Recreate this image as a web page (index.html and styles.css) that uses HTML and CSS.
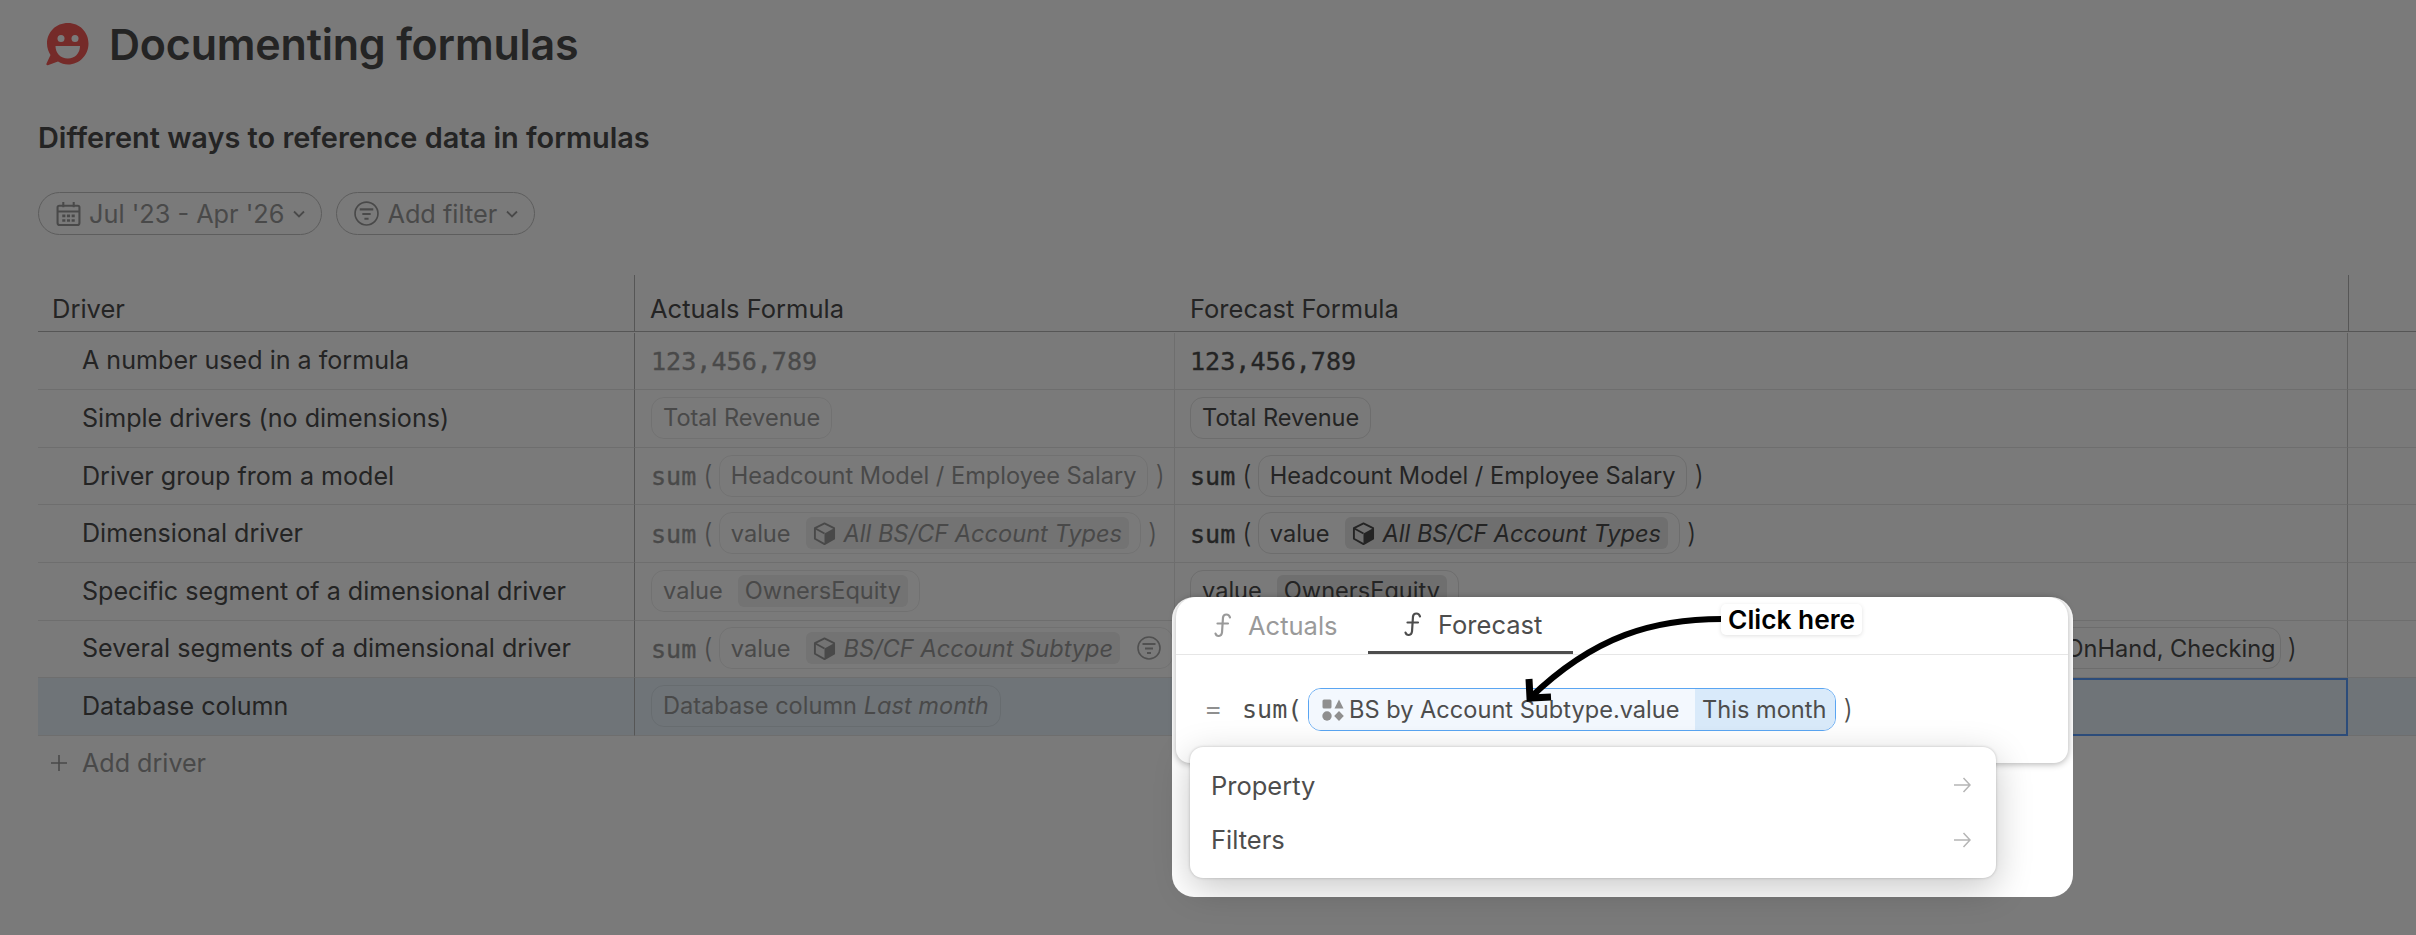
FILE: index.html
```html
<!doctype html>
<html>
<head>
    <meta charset="utf-8">
    <title>Documenting formulas</title>
    <link rel="stylesheet" href="styles.css">
</head>
<body>
<svg width="0" height="0" class="defs">
    <symbol id="cube" viewBox="0 0 24 24">
        <path d="M12 1.5 22 6.5V17.5L12 23 2 17.5V6.5Z" fill="none" stroke="currentColor" stroke-width="2" stroke-linejoin="round"/>
        <path d="M12 12 22 6.5V17.5L12 23Z" fill="currentColor"/>
        <path d="M2 6.5 12 12" stroke="currentColor" stroke-width="2"/>
    </symbol>
    <symbol id="filter" viewBox="0 0 24 24">
        <circle cx="12" cy="12" r="11" fill="none" stroke="currentColor" stroke-width="1.6"/>
        <path d="M5.5 8h13M8 12.5h8M10 17h4" fill="none" stroke="currentColor" stroke-width="2"/>
    </symbol>
    <symbol id="chevron" viewBox="0 0 14 14">
        <path d="M2 4.5 7 9.5 12 4.5" fill="none" stroke="currentColor" stroke-width="1.8"/>
    </symbol>
    <symbol id="fx" viewBox="0 0 20 26">
        <path d="M17 5.500C16 1.500 10.500 1.500 10 5.500L9 20.500C8.500 25 3.500 25 2.500 21.500M4.500 11.500H15" fill="none" stroke="currentColor" stroke-width="2.200" stroke-linecap="round"/>
    </symbol>
    <symbol id="go" viewBox="0 0 18 18">
        <path d="M1 9H17M10.500 2 17 9 10.500 16" fill="none" stroke="currentColor" stroke-width="1.500"/>
    </symbol>
</svg>

<div class="page">
    <header class="title">
        <svg class="logo" viewBox="0 0 44 44">
            <path d="M23 1C11 1 2 10 2 21.500C2 26 3.500 30 5.500 33L1.500 41.500C1 43 2 43.500 3.500 43L13 39.500C16 41.500 19.500 42.500 23 42.500C34.500 42.500 43.500 33 43.500 21.500C43.500 10 34.500 1 23 1Z" fill="#f45a57"/>
            <circle cx="16" cy="16.500" r="3.500" fill="#fff"/>
            <circle cx="30" cy="16.500" r="3.500" fill="#fff"/>
            <path d="M10.500 24H35C35 31 30 36.500 22.800 36.500C15.500 36.500 10.500 31 10.500 24Z" fill="#fff"/>
        </svg>
        <h1>Documenting formulas</h1>
    </header>
    <h2>Different ways to reference data in formulas</h2>
    <div class="filters">
        <div class="pill">
            <svg class="pill-icon" viewBox="0 0 24 24"><path d="M3 4.500H21A1.500 1.500 0 0 1 22.500 6V21A2 2 0 0 1 20.500 23H3.500A2 2 0 0 1 1.500 21V6A1.500 1.500 0 0 1 3 4.500ZM1.500 10H22.500M7 1V6M17 1V6" fill="none" stroke="currentColor" stroke-width="2"/><path d="M6 13h3v2.500H6zM10.500 13h3v2.500h-3zM15 13h3v2.500h-3zM6 17.500h3V20H6zM10.500 17.500h3V20h-3zM15 17.500h3V20h-3z" fill="currentColor"/></svg>
            <span>Jul '23 - Apr '26</span>
            <svg class="chev"><use href="#chevron"/></svg>
        </div>
        <div class="pill">
            <svg class="pill-icon"><use href="#filter"/></svg>
            <span>Add filter</span>
            <svg class="chev"><use href="#chevron"/></svg>
        </div>
    </div>

    <div class="grid">
        <div class="head first">Driver</div>
        <div class="head second">Actuals Formula</div>
        <div class="head third">Forecast Formula</div>
        <div class="head last"></div>

        <div class="cell name">A number used in a formula</div>
        <div class="cell actuals"><span class="mono">123,456,789</span></div>
        <div class="cell forecast"><span class="mono">123,456,789</span></div>
        <div class="cell end"></div>

        <div class="cell name">Simple drivers (no dimensions)</div>
        <div class="cell actuals"><span class="chip">Total Revenue</span></div>
        <div class="cell forecast"><span class="chip">Total Revenue</span></div>
        <div class="cell end"></div>

        <div class="cell name">Driver group from a model</div>
        <div class="cell actuals"><span class="mono fn">sum</span><span class="paren">(</span><span class="chip">Headcount Model / Employee Salary</span><span class="paren close">)</span></div>
        <div class="cell forecast"><span class="mono fn">sum</span><span class="paren">(</span><span class="chip">Headcount Model / Employee Salary</span><span class="paren close">)</span></div>
        <div class="cell end"></div>

        <div class="cell name">Dimensional driver</div>
        <div class="cell actuals"><span class="mono fn">sum</span><span class="paren">(</span><span class="chip">value<span class="seg"><svg class="cube"><use href="#cube"/></svg><i>All BS/CF Account Types</i></span></span><span class="paren close">)</span></div>
        <div class="cell forecast"><span class="mono fn">sum</span><span class="paren">(</span><span class="chip">value<span class="seg"><svg class="cube"><use href="#cube"/></svg><i>All BS/CF Account Types</i></span></span><span class="paren close">)</span></div>
        <div class="cell end"></div>

        <div class="cell name">Specific segment of a dimensional driver</div>
        <div class="cell actuals"><span class="chip">value<span class="seg plain">OwnersEquity</span></span></div>
        <div class="cell forecast"><span class="chip">value<span class="seg plain">OwnersEquity</span></span></div>
        <div class="cell end"></div>

        <div class="cell name">Several segments of a dimensional driver</div>
        <div class="cell actuals"><span class="mono fn">sum</span><span class="paren">(</span><span class="chip grow">value<span class="seg"><svg class="cube"><use href="#cube"/></svg><i>BS/CF Account Subtype</i></span><svg class="row-filter"><use href="#filter"/></svg></span></div>
        <div class="cell forecast wide"><span class="mono fn">sum</span><span class="paren">(</span><span class="chip grow">value<span class="seg"><svg class="cube"><use href="#cube"/></svg><i>BS/CF Account Subtype</i></span><svg class="row-filter"><use href="#filter"/></svg><span class="list">CashOnHand, Checking</span></span><span class="paren close">)</span></div>
        <div class="cell end"></div>

        <div class="cell name picked">Database column</div>
        <div class="cell actuals picked"><span class="chip">Database column&nbsp;<i>Last month</i></span></div>
        <div class="cell forecast picked active"></div>
        <div class="cell end picked"></div>
    </div>

    <div class="add-driver">
        <svg class="plus" viewBox="0 0 18 18"><path d="M9 1V17M1 9H17" fill="none" stroke="currentColor" stroke-width="1.600"/></svg>
        Add driver
    </div>
</div>

<div class="dim"></div>

<div class="spot">
    <div class="editor">
        <div class="tabs">
            <div class="tab"><svg class="fx"><use href="#fx"/></svg>Actuals</div>
            <div class="tab on"><svg class="fx"><use href="#fx"/></svg>Forecast</div>
        </div>
        <div class="formula">
            <span class="eq">=</span>
            <span class="mono sum">sum(</span>
            <span class="token">
                <span class="token-main">
                    <svg class="shapes" viewBox="0 0 22 22">
                        <rect x="0.500" y="0.500" width="9" height="9" rx="1.500" fill="#8f8f8f"/>
                        <path d="M17 0.500 21.500 9.500H12.500Z" fill="#8f8f8f"/>
                        <circle cx="5" cy="17" r="4.700" fill="#8f8f8f"/>
                        <path d="M17 12 21.800 17 17 22 12.200 17Z" fill="#8f8f8f"/>
                    </svg>
                    BS by Account Subtype.value
                </span>
                <span class="token-time">This month</span>
            </span>
            <span class="paren pop">)</span>
        </div>
    </div>
    <div class="menu">
        <div class="menu-item">Property<svg class="go"><use href="#go"/></svg></div>
        <div class="menu-item">Filters<svg class="go"><use href="#go"/></svg></div>
    </div>
</div>

<svg class="pointer" viewBox="0 0 215 100">
    <path d="M207 9C140 9 80 25 15 88" fill="none" stroke="#000" stroke-width="6"/>
    <path d="M14 69 15 88 36 87" fill="none" stroke="#000" stroke-width="7"/>
</svg>
<div class="hint">Click here</div>
</body>
</html>
```

FILE: styles.css
```css
html, body {
    margin: 0;
    height: 100%;
    overflow: hidden;
}
body {
    background: #fff;
    color: #4d4d4d;
    font-family: Inter, "Liberation Sans", sans-serif;
    font-size: 25.100px;
}
.defs {
    position: absolute;
}
.page {
    padding-left: 38px;
}

.title {
    display: flex;
    align-items: center;
    gap: 20px;
    height: 42px;
    padding-top: 23px;
    margin-left: 7px;
}
.logo {
    width: 44px;
    height: 44px;
}
h1 {
    margin: 0;
    font-size: 43px;
    font-weight: 600;
    letter-spacing: -0.2px;
}
h2 {
    margin: 54px 0 0;
    font-size: 28.900px;
    font-weight: 600;
    line-height: 38px;
    height: 38px;
}

.filters {
    display: flex;
    gap: 14px;
    margin-top: 35px;
    color: #9a9a9a;
}
.pill {
    display: flex;
    align-items: center;
    height: 41px;
    padding: 0 15px 0 17px;
    border: 1px solid #c2c2c2;
    border-radius: 22px;
    font-size: 25.300px;
}
.pill-icon {
    width: 25px;
    height: 25px;
    margin-right: 8px;
}
.chev {
    width: 14px;
    height: 14px;
    margin-left: 8px;
}

.grid {
    display: grid;
    grid-template-columns: 597px 540px 1173px 1fr;
    grid-auto-rows: 57.6px;
    margin-top: 40px;
}
.grid .head {
    display: flex;
    align-items: center;
    height: 57px;
    padding: 10px 0 0 14px;
    border-bottom: 1px solid #b5b5b5;
    box-sizing: border-box;
    font-size: 25.500px;
}
.head.first {
    border-right: 1px solid #b5b5b5;
}
.grid .head.second {
    padding-left: 15px;
}
.grid .head.third {
    padding-left: 15px;
}
.head.last {
    border-left: 1px solid #b5b5b5;
}
.cell {
    display: flex;
    align-items: center;
    min-width: 0;
    overflow: hidden;
    white-space: nowrap;
    box-sizing: border-box;
    border-bottom: 1px solid #e6e6e6;
    height: 57.6px;
    padding-bottom: 1px;
}
.name {
    padding-left: 44px;
    border-right: 1px solid #b5b5b5;
}
.actuals {
    padding: 0 15px 1px 16px;
    color: #9a9a9a;
    border-right: 1px solid #e6e6e6;
}
.forecast {
    padding-left: 15px;
    border-right: 1px solid #c8c8c8;
}
.forecast.wide {
    padding-right: 50px;
}
.picked {
    background: #e8f3fb;
}
.picked.active {
    border: 2px solid #5c9fff;
}

.mono {
    margin-top: 2px;
    font-family: "DejaVu Sans Mono", "Liberation Mono", monospace;
    font-size: 25.100px;
    -webkit-text-stroke: 0.35px currentColor;
}
.fn {
    margin-right: 7px;
}
.paren {
    font-size: 27px;
    font-weight: 300;
    margin-right: 6px;
}
.paren.close {
    margin: 0 0 0 7px;
}

.chip {
    display: inline-flex;
    align-items: center;
    flex: none;
    height: 42px;
    padding: 0 11px;
    box-sizing: border-box;
    border: 1px solid rgba(0, 0, 0, 0.11);
    border-radius: 13px;
    font-size: 23.600px;
}
.actuals .chip {
    border-color: rgba(0, 0, 0, 0.07);
}
.chip.grow {
    flex: 1;
}
.seg {
    display: inline-flex;
    align-items: center;
    height: 32px;
    margin-left: 15px;
    padding: 0 7px;
    background: #e8e8e8;
    border-radius: 6px;
}
.actuals .seg {
    background: #f0f0f0;
}
.cube {
    width: 23px;
    height: 23px;
    margin-right: 8px;
}
.row-filter {
    flex: none;
    width: 24px;
    height: 24px;
    margin-left: 17px;
    color: #a8a8a8;
}
.list {
    margin: 0 -7px 0 auto;
}

.add-driver {
    display: flex;
    align-items: center;
    height: 55px;
    padding-left: 12px;
    color: #999;
}
.plus {
    width: 18px;
    height: 18px;
    margin-right: 14px;
}

.dim {
    position: absolute;
    inset: 0;
    background: rgba(0, 0, 0, 0.52);
}

.spot {
    position: absolute;
    left: 1172px;
    top: 597px;
    width: 901px;
    height: 300px;
    background: #fff;
    border-radius: 22px;
}
.editor {
    height: 166px;
    margin: 0 5px 0 4px;
    background: #fff;
    border-radius: 20px 20px 14px 14px;
    box-shadow: 0 1px 7px rgba(0, 0, 0, 0.32);
}
.tabs {
    display: flex;
    height: 57px;
    padding-left: 25px;
    border-bottom: 1px solid #e6e6e6;
    font-size: 25.500px;
}
.tab {
    display: flex;
    align-items: center;
    width: 143px;
    padding: 0 12px;
    color: #9a9a9a;
    height: 56px;
}
.tab.on {
    width: 170px;
    padding: 0 0 0 35px;
    color: #4d4d4d;
    border-bottom: 3px solid #4d4d4d;
    height: 54px;
}
.fx {
    width: 20px;
    height: 26px;
    margin-right: 15px;
}
.formula {
    display: flex;
    align-items: center;
    height: 43px;
    margin-top: 33px;
    padding-left: 30px;
}
.eq {
    width: 36px;
    color: #8f8f8f;
    font-family: "DejaVu Sans Mono", monospace;
    font-size: 24px;
}
.sum {
    width: 66px;
    margin-top: 0;
    -webkit-text-stroke: 0;
}
.token {
    display: flex;
    align-items: stretch;
    height: 43px;
    box-sizing: border-box;
    border: 1.500px solid #5aa5f2;
    border-radius: 13px;
    overflow: hidden;
    font-size: 23.600px;
}
.token-main {
    display: flex;
    align-items: center;
    width: 386px;
    padding-left: 13px;
    box-sizing: border-box;
    background: #f3f8fe;
}
.shapes {
    width: 22px;
    height: 22px;
    margin-right: 5px;
}
.token-time {
    display: flex;
    align-items: center;
    padding: 0 9px 0 7px;
    background: #d9eafa;
}
.paren.pop {
    margin: 0 0 0 7px;
}

.menu {
    position: relative;
    width: 806px;
    height: 131px;
    margin: -16px 0 0 18px;
    padding: 11px 0;
    box-sizing: border-box;
    background: #fff;
    border-radius: 13px;
    box-shadow: 0 0 3px rgba(0, 0, 0, 0.22), 0 10px 36px rgba(0, 0, 0, 0.22);
}
.menu-item {
    display: flex;
    align-items: center;
    justify-content: space-between;
    height: 54.500px;
    padding: 0 25px 0 21px;
    font-size: 25.500px;
}
.go {
    width: 18px;
    height: 18px;
    color: #b5b5b5;
}

.pointer {
    position: absolute;
    left: 1515px;
    top: 610px;
    width: 215px;
    height: 100px;
}
.hint {
    position: absolute;
    left: 1721px;
    top: 604px;
    padding: 0 7px;
    height: 31px;
    line-height: 31px;
    background: #fff;
    border-radius: 5px;
    box-shadow: 0 1px 4px rgba(0, 0, 0, 0.12);
    color: #000;
    font-size: 26.300px;
    font-weight: 600;
}
```
